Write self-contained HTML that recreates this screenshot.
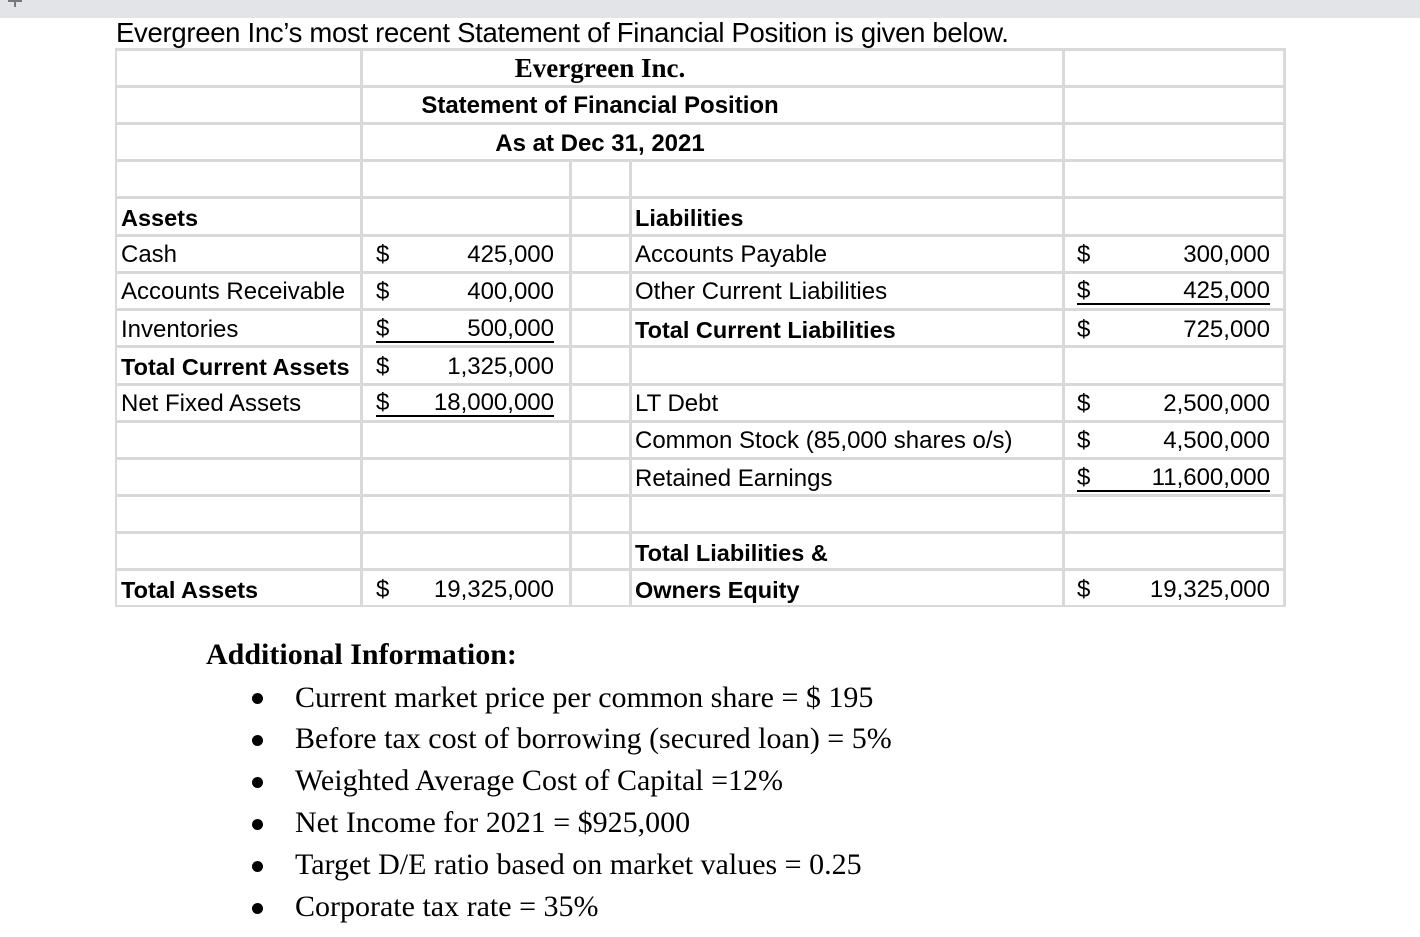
<!DOCTYPE html>
<html><head><meta charset="utf-8"><style>
body{margin:0;width:1420px;height:937px;background:#fff;position:relative;overflow:hidden;font-family:"Liberation Sans",sans-serif;color:#000}
.bar{position:absolute;left:0;top:0;width:1420px;height:18px;background:#e3e4e8}
.h{position:absolute;height:3px;background:#d9d9d9}
.v{position:absolute;width:3px;background:#d9d9d9}
.t{position:absolute;font-size:24px;white-space:nowrap;line-height:26px}
.b{font-weight:bold;font-size:23.5px}
.r{text-align:right}
.u{border-bottom:2px solid #000}
.tm{position:absolute;font-family:"Liberation Serif",serif;font-size:30px;white-space:nowrap;line-height:32px}
.dot{position:absolute;width:11px;height:11px;border-radius:50%;background:#000}
</style></head><body>
<div class="bar"></div>
<div style="position:absolute;left:8px;top:0;width:14px;height:2px;background:#777"></div>
<div style="position:absolute;left:14px;top:0;width:2px;height:7px;background:#777"></div>
<div class="t" style="left:116px;top:18px;font-size:27.5px;line-height:30px;letter-spacing:-0.3px">Evergreen Inc’s most recent Statement of Financial Position is given below.</div>

<div class="h" style="left:115px;width:1171px;top:48px"></div>
<div class="h" style="left:115px;width:1171px;top:85px"></div>
<div class="h" style="left:115px;width:1171px;top:122px"></div>
<div class="h" style="left:115px;width:1171px;top:159px"></div>
<div class="h" style="left:115px;width:1171px;top:196px"></div>
<div class="h" style="left:115px;width:1171px;top:234px"></div>
<div class="h" style="left:115px;width:1171px;top:271px"></div>
<div class="h" style="left:115px;width:1171px;top:308px"></div>
<div class="h" style="left:115px;width:1171px;top:345px"></div>
<div class="h" style="left:115px;width:1171px;top:383px"></div>
<div class="h" style="left:115px;width:1171px;top:420px"></div>
<div class="h" style="left:115px;width:1171px;top:457px"></div>
<div class="h" style="left:115px;width:1171px;top:494px"></div>
<div class="h" style="left:115px;width:1171px;top:531px"></div>
<div class="h" style="left:115px;width:1171px;top:568px"></div>
<div class="h" style="left:115px;width:1171px;top:605px;height:2px"></div>
<div class="v" style="left:115px;top:48px;height:559px;width:2px"></div>
<div class="v" style="left:360px;top:48px;height:559px"></div>
<div class="v" style="left:569px;top:160px;height:447px"></div>
<div class="v" style="left:629px;top:160px;height:447px"></div>
<div class="v" style="left:1062px;top:48px;height:559px"></div>
<div class="v" style="left:1283px;top:48px;height:559px"></div>

<div class="t b" style="left:363px;width:474px;text-align:center;top:55px;font-family:'Liberation Serif',serif;font-size:27px">Evergreen Inc.</div>
<div class="t b" style="left:363px;width:474px;text-align:center;top:93px;font-size:24px">Statement of Financial Position</div>
<div class="t b" style="left:363px;width:474px;text-align:center;top:131px;font-size:24px">As at Dec 31, 2021</div>

<div class="t b" style="left:121px;top:205px">Assets</div>
<div class="t" style="left:121px;top:242px">Cash</div>
<div class="t" style="left:121px;top:279px">Accounts Receivable</div>
<div class="t" style="left:121px;top:317px">Inventories</div>
<div class="t b" style="left:121px;top:354px">Total Current Assets</div>
<div class="t" style="left:121px;top:391px">Net Fixed Assets</div>
<div class="t b" style="left:121px;top:577px">Total Assets</div>

<div class="t" style="left:376px;top:242px">$</div>
<div class="t" style="left:376px;top:279px">$</div>
<div class="t u" style="left:376px;width:178px;top:317px;line-height:24px">$<span style="position:absolute;right:0">500,000</span></div>
<div class="t" style="left:376px;top:354px">$</div>
<div class="t u" style="left:376px;width:178px;top:391px;line-height:24px">$<span style="position:absolute;right:0">18,000,000</span></div>
<div class="t" style="left:376px;top:577px">$</div>
<div class="t r" style="left:380px;width:174px;top:242px">425,000</div>
<div class="t r" style="left:380px;width:174px;top:279px">400,000</div>
<div class="t r" style="left:380px;width:174px;top:354px">1,325,000</div>
<div class="t r" style="left:380px;width:174px;top:577px">19,325,000</div>

<div class="t b" style="left:635px;top:205px">Liabilities</div>
<div class="t" style="left:635px;top:242px">Accounts Payable</div>
<div class="t" style="left:635px;top:279px">Other Current Liabilities</div>
<div class="t b" style="left:635px;top:317px">Total Current Liabilities</div>
<div class="t" style="left:635px;top:391px">LT Debt</div>
<div class="t" style="left:635px;top:428px">Common Stock (85,000 shares o/s)</div>
<div class="t" style="left:635px;top:466px">Retained Earnings</div>
<div class="t b" style="left:635px;top:540px">Total Liabilities &amp;</div>
<div class="t b" style="left:635px;top:577px">Owners Equity</div>

<div class="t" style="left:1077px;top:242px">$</div>
<div class="t u" style="left:1077px;width:193px;top:279px;line-height:24px">$<span style="position:absolute;right:0">425,000</span></div>
<div class="t" style="left:1077px;top:317px">$</div>
<div class="t" style="left:1077px;top:391px">$</div>
<div class="t" style="left:1077px;top:428px">$</div>
<div class="t u" style="left:1077px;width:193px;top:466px;line-height:24px">$<span style="position:absolute;right:0">11,600,000</span></div>
<div class="t" style="left:1077px;top:577px">$</div>
<div class="t r" style="left:1090px;width:180px;top:242px">300,000</div>
<div class="t r" style="left:1090px;width:180px;top:317px">725,000</div>
<div class="t r" style="left:1090px;width:180px;top:391px">2,500,000</div>
<div class="t r" style="left:1090px;width:180px;top:428px">4,500,000</div>
<div class="t r" style="left:1090px;width:180px;top:577px">19,325,000</div>

<div class="tm b" style="left:206px;top:639px">Additional Information:</div>
<div class="dot" style="left:252px;top:693px"></div>
<div class="tm" style="left:295px;top:682px">Current market price per common share = $ 195</div>
<div class="dot" style="left:252px;top:735px"></div>
<div class="tm" style="left:295px;top:723px">Before tax cost of borrowing (secured loan) = 5%</div>
<div class="dot" style="left:252px;top:777px"></div>
<div class="tm" style="left:295px;top:765px">Weighted Average Cost of Capital =12%</div>
<div class="dot" style="left:252px;top:819px"></div>
<div class="tm" style="left:295px;top:807px">Net Income for 2021 = $925,000</div>
<div class="dot" style="left:252px;top:861px"></div>
<div class="tm" style="left:295px;top:849px">Target D/E ratio based on market values = 0.25</div>
<div class="dot" style="left:252px;top:903px"></div>
<div class="tm" style="left:295px;top:891px">Corporate tax rate = 35%</div>
</body></html>
